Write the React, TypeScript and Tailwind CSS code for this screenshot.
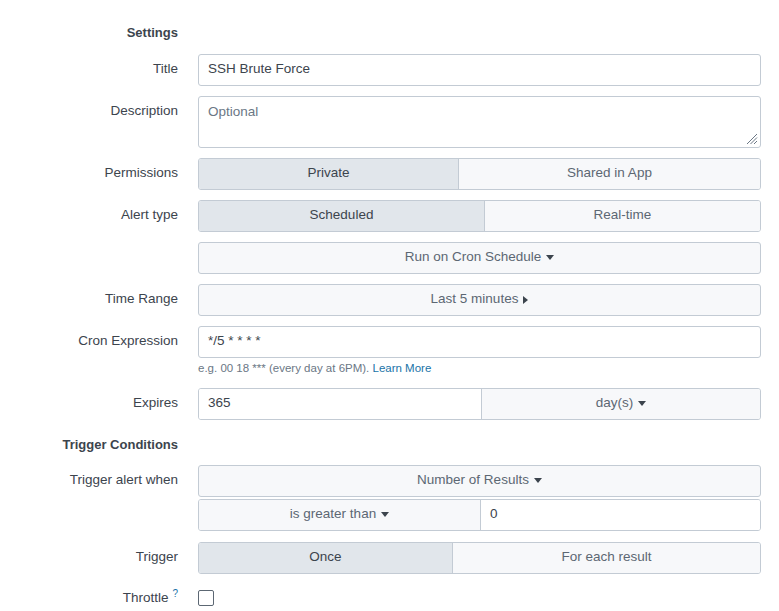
import React from "react";

const Caret = ({ right = false }: { right?: boolean }) =>
  right ? (
    <svg width="5" height="8" viewBox="0 0 5 8" className="ml-[5px] inline-block">
      <path d="M0 0 L5 4 L0 8 Z" fill="#3c444d" />
    </svg>
  ) : (
    <svg width="8" height="5" viewBox="0 0 8 5" className="ml-[5px] inline-block">
      <path d="M0 0 L8 0 L4 5 Z" fill="#3c444d" />
    </svg>
  );

const Row = ({
  label,
  className = "",
  children,
}: {
  label: React.ReactNode;
  className?: string;
  children: React.ReactNode;
}) => (
  <div className={`flex items-start ${className}`}>
    <div className="w-[178px] shrink-0 pt-[5px] text-right leading-5 text-[#3c444d]">{label}</div>
    <div className="ml-[20px] w-[563px]">{children}</div>
  </div>
);

const TextBox = ({ value }: { value: string }) => (
  <div className="flex h-[32px] items-center rounded-[3px] border border-[#c3cbd4] bg-white px-[9px] pb-[1px] text-[#3c444d]">
    {value}
  </div>
);

const Segmented = ({ options, split }: { options: string[]; split: string }) => (
  <div
    className="grid h-[32px] overflow-hidden rounded-[3px] border border-[#c3cbd4]"
    style={{ gridTemplateColumns: split }}
  >
    {options.map((opt, i) => (
      <div
        key={opt}
        className={`flex items-center justify-center pb-[1px] ${
          i === 0 ? "bg-[#e1e6eb] text-[#3c444d]" : "border-l border-[#c3cbd4] bg-[#f7f8fa] text-[#5c6773]"
        }`}
      >
        {opt}
      </div>
    ))}
  </div>
);

const Dropdown = ({ text, right = false }: { text: string; right?: boolean }) => (
  <div className="flex h-[32px] items-center justify-center rounded-[3px] border border-[#c3cbd4] bg-[#f7f8fa] pb-[1px] text-[#5c6773]">
    {text}
    <Caret right={right} />
  </div>
);

export default function App() {
  return (
    <div
      className="min-h-[611px] w-[779px] bg-white text-[13.5px]"
      style={{ fontFamily: '"Liberation Sans", Arial, sans-serif' }}
    >
      <div className="pt-[23px]">
        <div className="flex">
          <div className="w-[178px] text-right text-[13px] font-bold leading-5 text-[#3c444d]">Settings</div>
        </div>

        <Row label="Title" className="mt-[11px]">
          <TextBox value="SSH Brute Force" />
        </Row>

        <Row label="Description" className="mt-[10px]">
          <div className="relative h-[52px] rounded-[3px] border border-[#c3cbd4] bg-white px-[9px] pt-[5px] leading-5 text-[#6b7785]">
            Optional
            <svg width="12" height="12" viewBox="0 0 12 12" className="absolute bottom-[2px] right-[2px]">
              <path d="M11 1 L1 11 M11 4.5 L4.5 11 M11 8 L8 11" stroke="#6b7785" strokeWidth="1" />
            </svg>
          </div>
        </Row>

        <Row label="Permissions" className="mt-[10px]">
          <Segmented options={["Private", "Shared in App"]} split="259px 1fr" />
        </Row>

        <Row label="Alert type" className="mt-[10px]">
          <Segmented options={["Scheduled", "Real-time"]} split="285px 1fr" />
        </Row>

        <Row label="" className="mt-[10px]">
          <Dropdown text="Run on Cron Schedule" />
        </Row>

        <Row label="Time Range" className="mt-[10px]">
          <Dropdown text="Last 5 minutes" right />
        </Row>

        <Row label="Cron Expression" className="mt-[10px]">
          <TextBox value="*/5 * * * *" />
          <div className="mt-[3px] text-[11.5px] leading-[14px] text-[#6b7785]">
            e.g. 00 18 *** (every day at 6PM). <span className="text-[#1a73a8]">Learn More</span>
          </div>
        </Row>

        <Row label="Expires" className="mt-[13px]">
          <div className="grid h-[32px] grid-cols-[282px_1fr] overflow-hidden rounded-[3px] border border-[#c3cbd4]">
            <div className="flex items-center bg-white px-[9px] pb-[1px] text-[#3c444d]">365</div>
            <div className="flex items-center justify-center border-l border-[#c3cbd4] bg-[#f7f8fa] pb-[1px] text-[#5c6773]">
              day(s)
              <Caret />
            </div>
          </div>
        </Row>

        <div className="mt-[15px] flex">
          <div className="w-[178px] text-right text-[13px] font-bold leading-5 text-[#3c444d]">Trigger Conditions</div>
        </div>

        <Row label="Trigger alert when" className="mt-[10px]">
          <Dropdown text="Number of Results" />
          <div className="mt-[2px] grid h-[32px] grid-cols-[281px_1fr] overflow-hidden rounded-[3px] border border-[#c3cbd4]">
            <div className="flex items-center justify-center bg-[#f7f8fa] pb-[1px] text-[#5c6773]">
              is greater than
              <Caret />
            </div>
            <div className="flex items-center border-l border-[#c3cbd4] bg-white px-[9px] pb-[1px] text-[#3c444d]">0</div>
          </div>
        </Row>

        <Row label="Trigger" className="mt-[11px]">
          <Segmented options={["Once", "For each result"]} split="253px 1fr" />
        </Row>

        <div className="mt-[14px] flex items-center">
          <div className="w-[178px] text-right leading-5 text-[#3c444d]">
            Throttle
            <sup className="ml-[4px] text-[10px] text-[#1a73a8]">?</sup>
          </div>
          <div className="ml-[20px] h-[16px] w-[16px] rounded-[2px] border border-[#5c6773] bg-white" />
        </div>
      </div>
    </div>
  );
}
